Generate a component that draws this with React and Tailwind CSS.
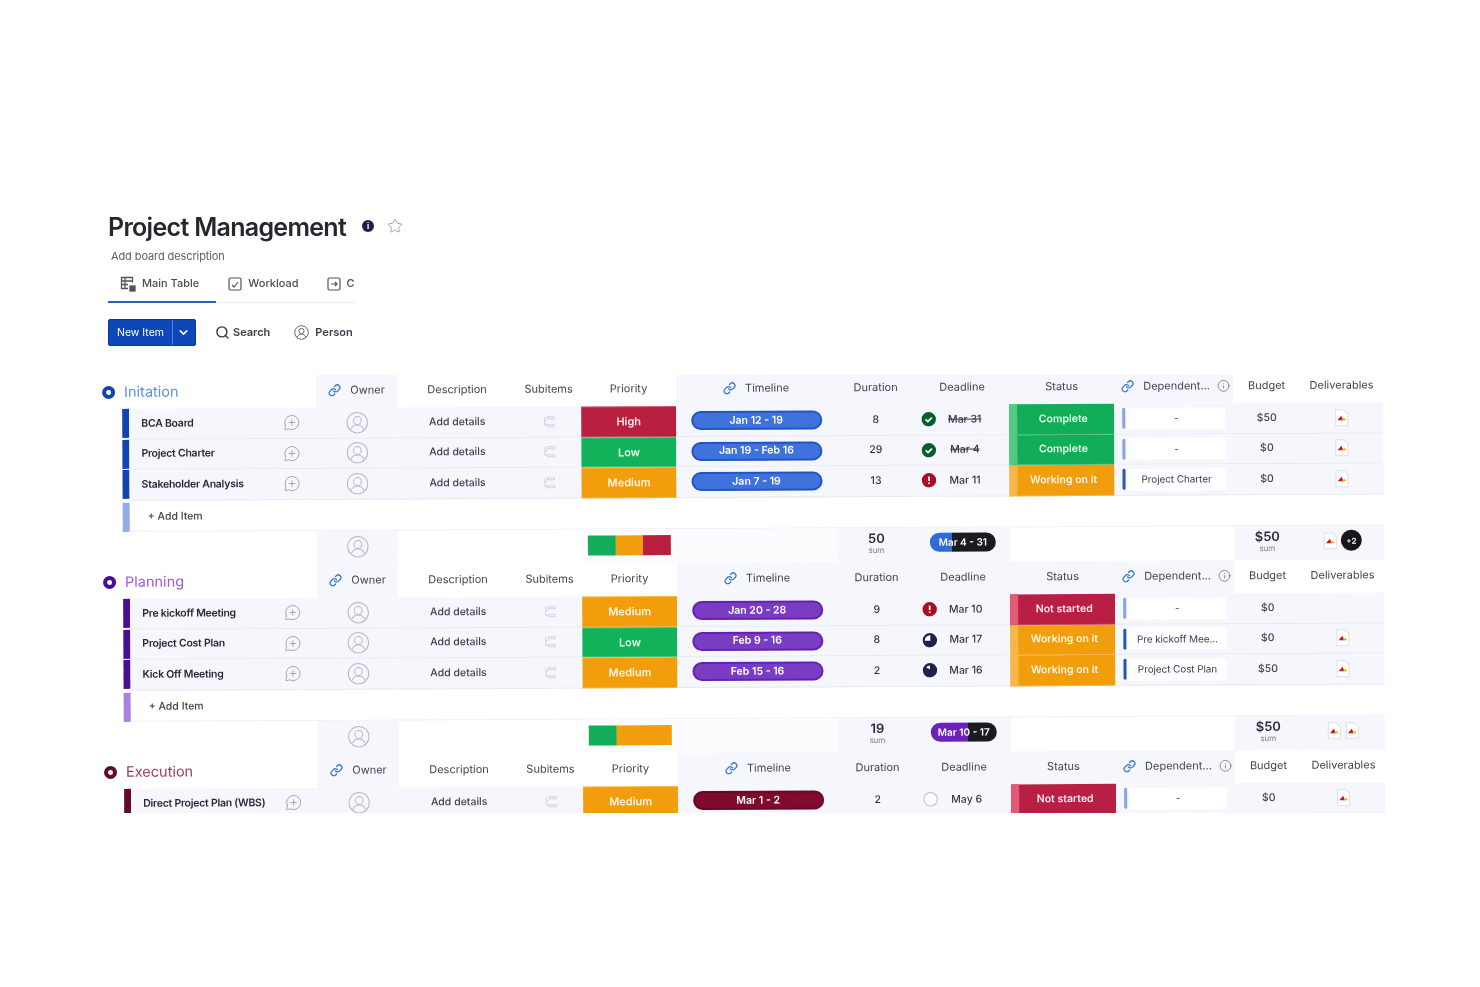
import React from "react";
import { Link, MessageCirclePlus, Star, Info, Search, ChevronDown } from "lucide-react";

const GRID = "grid grid-cols-[216px_81px_120px_64px_95px_160px_79px_94px_105px_119px_67px_83px]";
const TINT = "bg-[#f5f7fd]";

function Avatar() {
  return (
    <svg width="22" height="22" viewBox="0 0 22 22" fill="none" stroke="#b4b7c2" strokeWidth="1">
      <circle cx="11" cy="11" r="10.2" />
      <circle cx="11" cy="8.8" r="3.9" />
      <path d="M4.6 17.6c1-3 3.4-4.4 6.4-4.4s5.400 1.400 6.400 4.400" />
    </svg>
  );
}

function SubIcon() {
  return (
    <svg width="12" height="12" viewBox="0 0 12 12" fill="none" stroke="#d0d3dc" strokeWidth="1">
      <path d="M1.500 1v8.500h2M1.500 5h2" />
      <rect x="4" y="1" width="7" height="2" />
      <rect x="4" y="9" width="7" height="2" />
    </svg>
  );
}

function Doc() {
  return (
    <svg width="15" height="18" viewBox="0 0 15 18" className="shrink-0">
      <path d="M1.500 1h8l4 4v12h-12z" fill="#fff" stroke="#dedfe5" strokeWidth="1" />
      <path d="M3.200 11.500l3.800-4.500 2 4.500z" fill="#c8102e" />
      <path d="M7 11.500l3-2.500 2 2.500z" fill="#f5b301" />
    </svg>
  );
}

function DeadlineIcon({ kind }) {
  if (kind === "done")
    return (
      <svg width="15" height="15" viewBox="0 0 15 15" className="shrink-0">
        <circle cx="7.500" cy="7.500" r="7.200" fill="#075f2a" />
        <path d="M4.300 7.600l2.300 2.200 4-4" fill="none" stroke="#fff" strokeWidth="1.800" />
      </svg>
    );
  if (kind === "late")
    return (
      <svg width="15" height="15" viewBox="0 0 15 15" className="shrink-0">
        <circle cx="7.500" cy="7.500" r="7.200" fill="#a80f22" />
        <path d="M7.500 3.800v4.400M7.500 9.800v1.500" stroke="#fff" strokeWidth="1.800" />
      </svg>
    );
  if (kind === "half")
    return (
      <svg width="15" height="15" viewBox="0 0 15 15" className="shrink-0">
        <circle cx="7.500" cy="7.500" r="7.200" fill="#1c2150" />
        <path d="M8 8V2.500a5.200 5.200 0 0 0-5.500 5.500z" fill="#fff" />
      </svg>
    );
  if (kind === "small")
    return (
      <svg width="15" height="15" viewBox="0 0 15 15" className="shrink-0">
        <circle cx="7.500" cy="7.500" r="7.200" fill="#1c2150" />
        <path d="M7.500 6.500V2.600a4.900 4.900 0 0 0-3.800 2z" fill="#fff" />
      </svg>
    );
  return (
    <svg width="15" height="15" viewBox="0 0 15 15" className="shrink-0">
      <circle cx="7.500" cy="7.500" r="6.700" fill="#fff" stroke="#c4c6ce" strokeWidth="1.200" />
    </svg>
  );
}

function Pri({ v }) {
  const c = v === "High" ? "bg-[#b9203f]" : v === "Low" ? "bg-[#12b25a]" : "bg-[#f29d0c]";
  return (
    <div className={`h-full flex items-center justify-center text-[11px] font-semibold text-white/90 border-y border-white/25 ${c}`}>{v}</div>
  );
}

function Stat({ v }) {
  const c =
    v === "Complete"
      ? "bg-[#12ad58] border-l-[#52c985]"
      : v === "Working on it"
        ? "bg-[#f29d0c] border-l-[#f5b64a]"
        : "bg-[#b91f45] border-l-[#e35a74]";
  return (
    <div className={`h-full flex items-center justify-center pr-[5px] text-[10.500px] font-semibold text-white/90 border-l-[8px] border-b border-b-white/25 ${c}`}>{v}</div>
  );
}

function HeadCell({ children, tint, link, info, cls = "" }) {
  return (
    <div className={`flex items-center justify-center gap-[9px] pb-[3px] text-[11px] text-[#41444f] ${tint ? TINT : ""} ${cls}`}>
      {link && <Link size={13} strokeWidth={2.400} className="text-[#3a78c9] shrink-0" />}
      <span>{children}</span>
      {info && <Info size={13} strokeWidth={1.300} className="text-[#60636e] -ml-[2px] -mr-1 shrink-0" />}
    </div>
  );
}

function Row({ r, g }) {
  const cell = `flex items-center justify-center ${TINT} border-b border-[#e7eaf3]`;
  return (
    <div className={`${GRID} h-[30.500px]`}>
      <div className="pl-[22px] h-full flex">
        <div className={`w-[7px] h-[29px] ${g.bar}`} />
        <div className={`flex-1 flex items-center justify-between pl-[12px] pr-[16px] ${TINT} border-b border-[#e7eaf3]`}>
          <span className="text-[10.500px] font-semibold text-[#262833] whitespace-nowrap tracking-[-0.25px]">{r.name}</span>
          <MessageCirclePlus size={17} strokeWidth={1.100} className="text-[#8f929e] shrink-0" />
        </div>
      </div>
      <div className={cell}><Avatar /></div>
      <div className={`${cell} text-[10.500px] font-medium text-[#3d3f4b]`}>Add details</div>
      <div className={cell}><SubIcon /></div>
      <div className="h-full"><Pri v={r.pri} /></div>
      <div className={cell}>
        <div className={`w-[131px] h-[19px] rounded-full border-2 flex items-center justify-center text-[10.500px] font-semibold text-white ${g.pill}`}>{r.time}</div>
      </div>
      <div className={`${cell} text-[10.500px] font-medium text-[#333541]`}>{r.dur}</div>
      <div className={`${cell} gap-[10px] pr-[20px] text-[10.500px] font-medium text-[#333541]`}>
        <DeadlineIcon kind={r.icon} />
        <span className={`w-[38px] text-center ${r.strike ? "line-through" : ""}`}>{r.date}</span>
      </div>
      <div className="h-full"><Stat v={r.status} /></div>
      <div className={`${cell} justify-start pl-[8px] pr-[8px]`}>
        <div className={`w-[3px] h-[21px] rounded-sm shrink-0 ${r.dep === "-" ? "bg-[#86a5e2]" : "bg-[#2457b3]"}`} />
        <div className="ml-[2px] flex-1 h-[22px] bg-white flex items-center justify-center text-[10px] tracking-[-0.1px] text-[#3d3f4b] whitespace-nowrap">{r.dep}</div>
      </div>
      <div className={`${cell} text-[10.500px] font-medium text-[#44464f]`}>{r.bud}</div>
      <div className={cell}>{r.doc && <Doc />}</div>
    </div>
  );
}

function Section({ g }) {
  return (
    <div className="h-[190px]">
      <div className={`${GRID} h-[33px]`}>
        <div className="flex items-center pl-[2px] pb-[1px] gap-[9px]">
          <span className={`w-[13px] h-[13px] rounded-full border-4 bg-white ${g.ring}`} />
          <span className={`text-[14.500px] ${g.title}`}>{g.name}</span>
        </div>
        <HeadCell tint link>Owner</HeadCell>
        <HeadCell>Description</HeadCell>
        <HeadCell cls="pr-[1px]">Subitems</HeadCell>
        <HeadCell>Priority</HeadCell>
        <HeadCell tint link>Timeline</HeadCell>
        <HeadCell tint>Duration</HeadCell>
        <HeadCell tint>Deadline</HeadCell>
        <HeadCell tint>Status</HeadCell>
        <HeadCell tint link info>Dependent...</HeadCell>
        <HeadCell>Budget</HeadCell>
        <HeadCell>Deliverables</HeadCell>
      </div>
      {g.rows.map((r) => <Row key={r.name} r={r} g={g} />)}
      {g.sum && (
        <>
          <div className="h-[31px] pl-[22px] flex">
            <div className={`w-[7px] h-[29px] mt-[2px] ${g.addBar}`} />
            <div className="flex-1 flex items-center pl-[18px] pt-[2px] border-b border-[#eef0f6] text-[10.500px] text-[#3d3f4b] font-medium">+ Add Item</div>
          </div>
          <div className={`${GRID} h-[34.500px]`}>
            <div />
            <div className={`flex items-center justify-center pb-[2px] ${TINT}`}><Avatar /></div>
            <div />
            <div />
            <div className="flex items-center justify-center pb-[2px] bg-[#fbfcfe]">
              <div className="w-[83px] h-[20px] flex">
                {g.sum.bars.map((b, i) => <div key={i} className={b} />)}
              </div>
            </div>
            <div className="bg-[#fcfcfe]" />
            <div className={`flex flex-col items-center justify-center pb-[2px] ${TINT}`}>
              <span className="text-[13px] leading-[14px] font-semibold text-[#2b2d38]">{g.sum.dur}</span>
              <span className="text-[8px] leading-[11px] text-[#7d808c]">sum</span>
            </div>
            <div className={`flex items-center justify-center pb-[4px] ${TINT}`}>
              <div className={`w-[66px] h-[19px] rounded-full flex items-center justify-center text-[10px] font-semibold text-white ${g.sum.pill}`}>{g.sum.date}</div>
            </div>
            <div />
            <div />
            <div className={`flex flex-col items-center justify-center pb-[2px] ${TINT}`}>
              <span className="text-[13px] leading-[14px] font-semibold text-[#2b2d38]">$50</span>
              <span className="text-[8px] leading-[11px] text-[#7d808c]">sum</span>
            </div>
            <div className={`flex items-center justify-center gap-[3px] pb-[4px] ${TINT}`}>
              <Doc />
              {g.sum.more ? (
                <span className="w-[21px] h-[21px] rounded-full bg-[#17171a] text-white text-[8px] font-semibold flex items-center justify-center">+2</span>
              ) : (
                <Doc />
              )}
            </div>
          </div>
        </>
      )}
    </div>
  );
}

const groups = [
  {
    name: "Initation",
    ring: "border-[#0f45ad]",
    title: "text-[#5d8fe0]",
    bar: "bg-[#0f45ad]",
    addBar: "bg-[#93ace4]",
    pill: "bg-[#3f72dc] border-[#1f56c4]",
    rows: [
      { name: "BCA Board", pri: "High", time: "Jan 12 - 19", dur: "8", icon: "done", date: "Mar 31", strike: true, status: "Complete", dep: "-", bud: "$50", doc: true },
      { name: "Project Charter", pri: "Low", time: "Jan 19 - Feb 16", dur: "29", icon: "done", date: "Mar 4", strike: true, status: "Complete", dep: "-", bud: "$0", doc: true },
      { name: "Stakeholder Analysis", pri: "Medium", time: "Jan 7 - 19", dur: "13", icon: "late", date: "Mar 11", status: "Working on it", dep: "Project Charter", bud: "$0", doc: true },
    ],
    sum: {
      bars: ["flex-1 bg-[#12ad58]", "flex-1 bg-[#f29d0c]", "flex-1 bg-[#b9203f]"],
      dur: "50",
      date: "Mar 4 - 31",
      pill: "bg-[linear-gradient(90deg,#2f6bd8_34%,#1b1b1f_34%)]",
      more: true,
    },
  },
  {
    name: "Planning",
    ring: "border-[#4a0e94]",
    title: "text-[#9c5bd6]",
    bar: "bg-[#4a0e94]",
    addBar: "bg-[#ab82de]",
    pill: "bg-[#7b3cc4] border-[#6322b4]",
    rows: [
      { name: "Pre kickoff Meeting", pri: "Medium", time: "Jan 20 - 28", dur: "9", icon: "late", date: "Mar 10", status: "Not started", dep: "-", bud: "$0", doc: false },
      { name: "Project Cost Plan", pri: "Low", time: "Feb 9 - 16", dur: "8", icon: "half", date: "Mar 17", status: "Working on it", dep: "Pre kickoff Mee...", bud: "$0", doc: true },
      { name: "Kick Off Meeting", pri: "Medium", time: "Feb 15 - 16", dur: "2", icon: "small", date: "Mar 16", status: "Working on it", dep: "Project Cost Plan", bud: "$50", doc: true },
    ],
    sum: {
      bars: ["flex-1 bg-[#12ad58]", "flex-[2] bg-[#f29d0c]"],
      dur: "19",
      date: "Mar 10 - 17",
      pill: "bg-[linear-gradient(90deg,#6a22b8_56%,#1b1b1f_56%)]",
      more: false,
    },
  },
  {
    name: "Execution",
    ring: "border-[#660a2a]",
    title: "text-[#a23c5e]",
    bar: "bg-[#660a2a]",
    addBar: "bg-[#c08a9c]",
    pill: "bg-[#7f0a2e] border-[#6b0724]",
    rows: [
      { name: "Direct Project Plan (WBS)", pri: "Medium", time: "Mar 1 - 2", dur: "2", icon: "empty", date: "May 6", status: "Not started", dep: "-", bud: "$0", doc: true },
    ],
  },
];

export default function App() {
  return (
    <div className="w-full h-[987px] overflow-hidden bg-white font-['Inter','Liberation_Sans',sans-serif] blur-[0.5px]">
      <div className="pt-[209px] pl-[108px]">
        <div className="flex items-center h-[36px]">
          <h1 className="pt-[2px] text-[25px] font-semibold tracking-[-0.7px] text-[#26272e] whitespace-nowrap">Project Management</h1>
          <span className="ml-[16px] -mt-[2px] w-[12px] h-[12px] rounded-full bg-[#1c1f4a] flex items-center justify-center text-[8px] font-bold text-white">i</span>
          <Star size={16} strokeWidth={1.200} className="ml-[13px] -mt-[3px] text-[#8b8e99]" />
        </div>
        <p className="mt-[3px] ml-[3px] text-[11px] leading-[16px] tracking-[-0.1px] text-[#5b5d68]">Add board description</p>
        <div className="mt-[2px] w-[247px] h-[37px] border-b border-[#eceef3] relative flex items-center text-[11px] font-medium text-[#4a4c57] whitespace-nowrap pb-[1px]">
          <svg className="ml-[12px] shrink-0" width="17" height="17" viewBox="0 0 17 17" fill="none" stroke="#50535e" strokeWidth="1.300">
            <path d="M8 13.500H1.500v-11h11v5M1.500 6h11M1.500 9.500h6.500M5 2.500v11" />
            <rect x="10" y="11" width="5" height="5" fill="#50535e" />
          </svg>
          <span className="ml-[5px]">Main Table</span>
          <svg className="ml-[29px] shrink-0" width="14" height="14" viewBox="0 0 14 14" fill="none" stroke="#50535e" strokeWidth="1.200">
            <rect x="1" y="1" width="12" height="12" rx="1.500" />
            <path d="M4 8l2 2 4-5" />
          </svg>
          <span className="ml-[6px]">Workload</span>
          <svg className="ml-[28px] shrink-0" width="14" height="14" viewBox="0 0 14 14" fill="none" stroke="#50535e" strokeWidth="1.200">
            <rect x="1" y="1" width="12" height="12" rx="1.500" />
            <path d="M4 7h6M8 5l2 2-2 2" />
          </svg>
          <span className="ml-[6px]">C</span>
          <div className="absolute left-0 bottom-[-1px] w-[108px] h-[2px] bg-[#2b5fb8]" />
        </div>
        <div className="mt-[16px] flex items-center h-[27px]">
          <div className="w-[88px] h-full rounded-[2px] bg-[#0d47b8] border border-[#0a3a99] flex items-center text-white text-[10.500px]">
            <span className="w-[63px] text-center">New Item</span>
            <span className="w-px h-full bg-[#5c82cf]" />
            <ChevronDown size={13} strokeWidth={3} className="ml-[4px]" />
          </div>
          <Search size={15} strokeWidth={2.200} className="ml-[19px] text-[#33353f]" />
          <span className="ml-[3px] text-[11px] font-semibold text-[#3b3d48]">Search</span>
          <svg className="ml-[24px]" width="15" height="15" viewBox="0 0 15 15" fill="none" stroke="#62656f" strokeWidth="1">
            <circle cx="7.500" cy="7.500" r="6.800" />
            <circle cx="7.500" cy="6" r="2.600" />
            <path d="M3.200 12c.8-2 2.300-3 4.300-3s3.500 1 4.300 3" />
          </svg>
          <span className="ml-[6px] text-[11px] font-semibold text-[#3b3d48]">Person</span>
        </div>
      </div>
      <div className="ml-[100px] mt-[29px] h-[438px] overflow-hidden">
        <div className="w-[1283px] origin-top-left rotate-[-0.29deg] translate-y-[1px]">
          {groups.map((g) => <Section key={g.name} g={g} />)}
        </div>
      </div>
    </div>
  );
}
